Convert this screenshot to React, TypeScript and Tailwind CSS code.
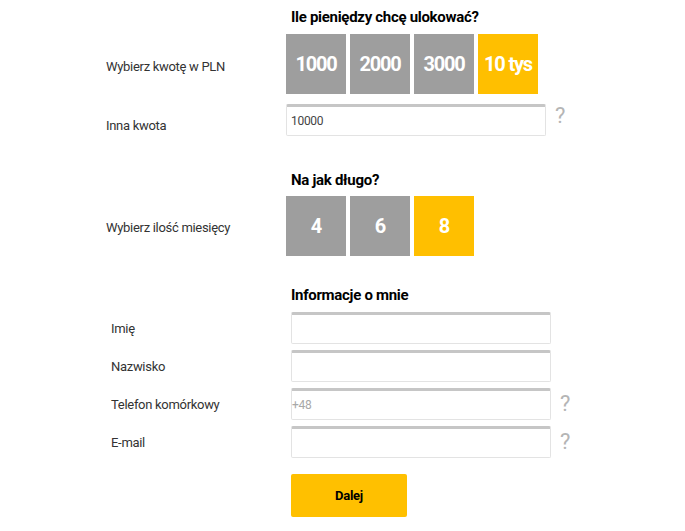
const font = { fontFamily: "'Roboto', 'Liberation Sans', sans-serif" };

function Tile({ label, active }: { label: string; active?: boolean }) {
  return (
    <div
      className={`w-[60px] h-[60px] flex items-center justify-center text-white font-bold text-[20px] tracking-[-1.2px] ${
        active ? "bg-[#ffbf00]" : "bg-[#9e9e9e]"
      }`}
    >
      {label}
    </div>
  );
}

function Field({ value, placeholder }: { value?: string; placeholder?: string }) {
  return (
    <div
      className={`w-[260px] h-[32px] border border-[#e3e3e3] border-t-[3px] border-t-[#c6c6c6] rounded-[2px] flex items-center text-[12px] ${
        value ? "text-[#444] px-[4px]" : "text-[#a8a8a8] px-[0px]"
      }`}
    >
      {value ?? placeholder}
    </div>
  );
}

function Help() {
  return <span className="text-[22px] leading-none text-[#b5b5b5] ml-[9px]">?</span>;
}

export default function App() {
  return (
    <div className="w-[685px] h-[531px] bg-white text-[#333] tracking-[-0.3px]" style={font}>
      <div className="pl-[106px] pt-[6px]">
        {/* kwota */}
        <div className="pl-[185px] h-[28px] font-bold text-[15px] text-black">Ile pieniędzy chcę ulokować?</div>
        <div className="flex items-center">
          <div className="w-[180px] text-[13px] pt-[6px]">Wybierz kwotę w PLN</div>
          <div className="flex gap-[4px]">
            <Tile label="1000" />
            <Tile label="2000" />
            <Tile label="3000" />
            <Tile label="10 tys" active />
          </div>
        </div>
        <div className="flex items-center mt-[10px]">
          <div className="w-[180px] text-[13px] pt-[12px]">Inna kwota</div>
          <Field value="10000" />
          <div className="-mt-[6px]">
            <Help />
          </div>
        </div>

        {/* okres */}
        <div className="pl-[185px] mt-[33px] h-[27px] font-bold text-[15px] text-black">Na jak długo?</div>
        <div className="flex items-center">
          <div className="w-[180px] text-[13px] pt-[4px]">Wybierz ilość miesięcy</div>
          <div className="flex gap-[4px]">
            <Tile label="4" />
            <Tile label="6" />
            <Tile label="8" active />
          </div>
        </div>

        {/* dane */}
        <div className="pl-[185px] mt-[28px] h-[28px] font-bold text-[15px] text-black">Informacje o mnie</div>
        <div className="flex flex-col gap-[6px] pl-[5px]">
          {[
            { l: "Imię" },
            { l: "Nazwisko" },
            { l: "Telefon komórkowy", p: "+48", h: true },
            { l: "E-mail", h: true },
          ].map((r) => (
            <div key={r.l} className="flex items-center">
              <div className="w-[180px] text-[13px] pt-[2px]">{r.l}</div>
              <Field placeholder={r.p} />
              {r.h && <Help />}
            </div>
          ))}
        </div>
        <div className="pl-[185px] mt-[16px]">
          <button className="w-[116px] h-[43px] bg-[#ffc000] rounded-[2px] font-bold text-[13px] text-black">
            Dalej
          </button>
        </div>
      </div>
    </div>
  );
}
